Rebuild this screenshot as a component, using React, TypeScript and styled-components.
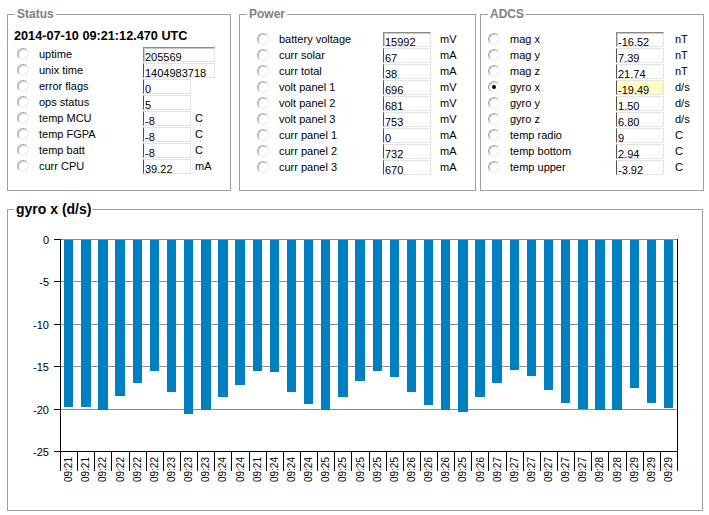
import React from "react";
import styled, { createGlobalStyle, css } from "styled-components";

const GlobalStyle = createGlobalStyle`
  html, body { margin: 0; padding: 0; background: #fff; }
  body { font-family: "Liberation Sans", Arial, sans-serif; font-size: 11px; color: #000; }
`;

const Window = styled.div`
  width: 709px;
  height: 515px;
  box-sizing: border-box;
  padding: 7px 0 0 7px;
  display: flex;
  flex-direction: column;
  gap: 10px;
  overflow: hidden;
`;

const TopRow = styled.div`
  display: flex;
  align-items: flex-start;
`;

const Group = styled.fieldset<{ $w: number; $h: number; $ml?: number }>`
  box-sizing: border-box;
  width: ${(p) => p.$w}px;
  height: ${(p) => p.$h}px;
  margin: 0 0 0 ${(p) => p.$ml ?? 0}px;
  padding: 0;
  border: 1px solid #a0a0a0;
  min-width: 0;
`;

const Legend = styled.legend<{ $big?: boolean }>`
  margin-left: ${(p) => (p.$big ? 6 : 7)}px;
  padding: 0 2px;
  font-family: "Liberation Sans", Arial, sans-serif;
  font-weight: bold;
  font-size: ${(p) => (p.$big ? 14 : 12)}px;
  line-height: ${(p) => (p.$big ? 16 : 14)}px;
  color: ${(p) => (p.$big ? "#000" : "#808080")};
`;

const GroupBody = styled.div<{ $pl: number; $pt: number }>`
  padding: ${(p) => p.$pt}px 0 0 ${(p) => p.$pl}px;
  display: flex;
  flex-direction: column;
`;

const DateLine = styled.div`
  font-weight: bold;
  font-size: 12.7px;
  line-height: 16px;
  height: 16px;
  margin: 0 0 3px -3px;
  white-space: nowrap;
`;

const Row = styled.div`
  display: flex;
  align-items: flex-start;
  height: 16px;
`;

const Radio = styled.span<{ $checked?: boolean }>`
  flex: none;
  box-sizing: border-box;
  width: 12px;
  height: 12px;
  margin: 1px 10px 0 0;
  border-radius: 50%;
  border: 1px solid;
  border-color: #a8a8a8 #ececec #ececec #a8a8a8;
  box-shadow: inset 1px 1px 0 #d0d0d0;
  background: #fff;
  display: flex;
  align-items: center;
  justify-content: center;
  &::after {
    content: "";
    display: ${(p) => (p.$checked ? "block" : "none")};
    width: 4px;
    height: 4px;
    border-radius: 50%;
    background: #000;
  }
`;

const Label = styled.span<{ $w: number }>`
  flex: none;
  width: ${(p) => p.$w}px;
  line-height: 14px;
  white-space: nowrap;
`;

const Value = styled.div<{ $wide?: boolean; $first?: boolean; $hl?: boolean }>`
  flex: none;
  box-sizing: border-box;
  width: ${(p) => (p.$wide ? 72 : 48)}px;
  height: 15px;
  border: 1px solid #e3e3e3;
  border-left-color: #505050;
  ${(p) =>
    p.$first &&
    css`
      border-top-color: #8a8a8a;
      border-left-color: #8a8a8a;
      box-shadow: inset 1px 1px 0 #c8c8c8;
    `}
  background: ${(p) => (p.$hl ? "#ffffc0" : "#fff")};
  padding: 3px 0 0 1px;
  line-height: 12px;
  overflow: hidden;
  white-space: nowrap;
`;

const Unit = styled.span<{ $ml: number }>`
  margin-left: ${(p) => p.$ml}px;
  line-height: 14px;
  white-space: nowrap;
`;

type Item = { label: string; value: string; unit?: string; wide?: boolean; checked?: boolean };

const statusItems: Item[] = [
  { label: "uptime", value: "205569", wide: true },
  { label: "unix time", value: "1404983718", wide: true },
  { label: "error flags", value: "0" },
  { label: "ops status", value: "5" },
  { label: "temp MCU", value: "-8", unit: "C" },
  { label: "temp FGPA", value: "-8", unit: "C" },
  { label: "temp batt", value: "-8", unit: "C" },
  { label: "curr CPU", value: "39.22", unit: "mA" },
];

const powerItems: Item[] = [
  { label: "battery voltage", value: "15992", unit: "mV" },
  { label: "curr solar", value: "67", unit: "mA" },
  { label: "curr total", value: "38", unit: "mA" },
  { label: "volt panel 1", value: "696", unit: "mV" },
  { label: "volt panel 2", value: "681", unit: "mV" },
  { label: "volt panel 3", value: "753", unit: "mV" },
  { label: "curr panel 1", value: "0", unit: "mA" },
  { label: "curr panel 2", value: "732", unit: "mA" },
  { label: "curr panel 3", value: "670", unit: "mA" },
];

const adcsItems: Item[] = [
  { label: "mag x", value: "-16.52", unit: "nT" },
  { label: "mag y", value: "7.39", unit: "nT" },
  { label: "mag z", value: "21.74", unit: "nT" },
  { label: "gyro x", value: "-19.49", unit: "d/s", checked: true },
  { label: "gyro y", value: "1.50", unit: "d/s" },
  { label: "gyro z", value: "6.80", unit: "d/s" },
  { label: "temp radio", value: "9", unit: "C" },
  { label: "temp bottom", value: "2.94", unit: "C" },
  { label: "temp upper", value: "-3.92", unit: "C" },
];

const Rows: React.FC<{ items: Item[]; labelW: number; unitGap: number }> = ({ items, labelW, unitGap }) => (
  <>
    {items.map((it, i) => (
      <Row key={it.label}>
        <Radio $checked={it.checked} />
        <Label $w={labelW}>{it.label}</Label>
        <Value $wide={it.wide} $first={i === 0} $hl={it.checked}>
          {it.value}
        </Value>
        {it.unit && <Unit $ml={unitGap}>{it.unit}</Unit>}
      </Row>
    ))}
  </>
);

const values = [
  19.66, 19.66, 20.05, 18.4, 16.9, 15.5, 17.9, 20.5, 20.1, 18.5, 17.1, 15.5, 15.6, 17.9, 19.3, 20.1, 18.5,
  16.6, 15.4, 16.1, 17.9, 19.5, 20.0, 20.3, 18.5, 16.9, 15.3, 16.0, 17.7, 19.2, 19.9, 20.1, 20.1, 17.5, 19.2,
  19.8,
];

const labels = [
  "09:21", "09:21", "09:22", "09:22", "09:22", "09:22", "09:23", "09:23", "09:23", "09:24", "09:24", "09:21",
  "09:24", "09:24", "09:24", "09:25", "09:25", "09:25", "09:25", "09:25", "09:26", "09:26", "09:26", "09:25",
  "09:26", "09:27", "09:27", "09:27", "09:27", "09:27", "09:27", "09:28", "09:28", "09:29", "09:29", "09:29",
];

const ChartSvg = styled.svg`
  display: block;
  font-family: "Liberation Sans", Arial, sans-serif;
`;

const X0 = 60;
const X1 = 677;
const Y0 = 239;
const PX = 8.48;
const PITCH = (X1 - X0) / 36;

const Chart: React.FC = () => {
  const yTicks = [0, 5, 10, 15, 20, 25];
  return (
    <ChartSvg width={694} height={293} viewBox="0 0 694 293">
      <g transform="translate(-8,-217)" shapeRendering="crispEdges">
        {yTicks.map((t) => {
          const y = Math.round(Y0 + t * PX) + 0.5;
          return (
            <g key={t}>
              {t !== 25 && <line x1={X0} x2={X1} y1={y} y2={y} stroke="#8c8c8c" />}
              <line x1={54} x2={X0} y1={y} y2={y} stroke="#000" />
              <text
                x={49}
                y={y + 4}
                textAnchor="end"
                fontSize={11}
                fill="#000"
                shapeRendering="auto"
              >
                {t === 0 ? "0" : `-${t}`}
              </text>
            </g>
          );
        })}
        {values.map((v, i) => {
          const l = Math.round(X0 + i * PITCH + 4);
          const r = Math.round(X0 + i * PITCH + 13.4);
          return <rect key={i} x={l} y={Y0 + 1} width={r - l} height={Math.round(v * PX)} fill="#0080c0" />;
        })}
        <line x1={X0 + 0.5} x2={X0 + 0.5} y1={Y0} y2={471} stroke="#000" />
        <line x1={X1 + 0.5} x2={X1 + 0.5} y1={Y0} y2={471} stroke="#000" />
        <line x1={54} x2={X1 + 1} y1={451.5} y2={451.5} stroke="#000" />
        {labels.map((lb, i) => {
          const sx = Math.round(X0 + (i + 1) * PITCH) + 0.5;
          const cx = X0 + (i + 0.5) * PITCH;
          return (
            <g key={i}>
              {i < 35 && <line x1={sx} x2={sx} y1={451} y2={471} stroke="#000" />}
              <text
                x={cx + 3.6}
                y={457}
                transform={`rotate(-90 ${cx + 3.6} 457)`}
                textAnchor="end"
                fontSize={10}
                fill="#000"
                shapeRendering="auto"
              >
                {lb}
              </text>
            </g>
          );
        })}
      </g>
    </ChartSvg>
  );
};

export default function App() {
  return (
    <>
      <GlobalStyle />
      <Window>
        <TopRow>
          <Group $w={224} $h={184}>
            <Legend>Status</Legend>
            <GroupBody $pl={9} $pt={7}>
              <DateLine>2014-07-10 09:21:12.470 UTC</DateLine>
              <Rows items={statusItems} labelW={104} unitGap={4} />
            </GroupBody>
          </Group>
          <Group $w={237} $h={184} $ml={8}>
            <Legend>Power</Legend>
            <GroupBody $pl={17} $pt={11}>
              <Rows items={powerItems} labelW={104} unitGap={9} />
            </GroupBody>
          </Group>
          <Group $w={224} $h={184} $ml={4}>
            <Legend>ADCS</Legend>
            <GroupBody $pl={7} $pt={11}>
              <Rows items={adcsItems} labelW={106} unitGap={11} />
            </GroupBody>
          </Group>
        </TopRow>
        <Group $w={696} $h={310}>
          <Legend $big>gyro x (d/s)</Legend>
          <Chart />
        </Group>
      </Window>
    </>
  );
}
